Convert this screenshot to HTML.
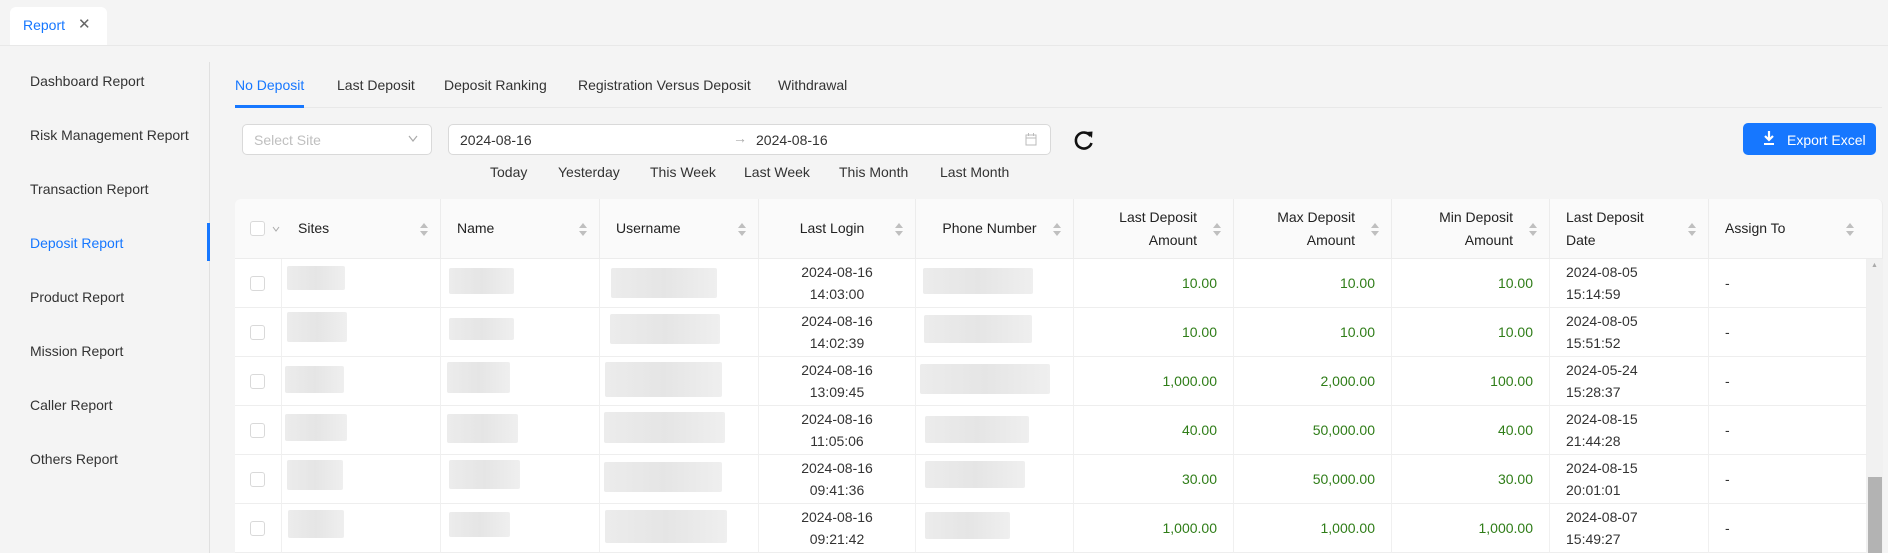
<!DOCTYPE html>
<html><head><meta charset="utf-8"><style>
*{box-sizing:border-box;margin:0;padding:0}
body{width:1888px;height:553px;overflow:hidden;background:#f4f4f4;font-family:"Liberation Sans",sans-serif;font-size:14px;color:#333;position:relative}
.a{position:absolute;white-space:nowrap}
.side{left:30px;font-size:14px;color:#333}
.tab{top:77px;font-size:14px}
.q{top:164px;font-size:14px;color:#333}
.th{position:absolute;top:199px;height:60px;background:#fafafa;border-right:1px solid #ececec;border-bottom:1px solid #ececec;color:#222;display:flex;align-items:center;padding:0 34px 0 16px;line-height:23px}
.sort{position:absolute;right:12px;top:24px;width:8px;height:13px}
.cell{position:absolute;height:49px;border-right:1px solid #f0f0f0;border-bottom:1px solid #eee;background:#fff;display:flex;align-items:center;line-height:22px}
.g{color:#2f7d18;justify-content:flex-end;padding-right:16px}
.blur{position:absolute;background:linear-gradient(90deg,#ececec,#e5e5e5 50%,#efefef);border-radius:2px}
.cb{position:absolute;width:15px;height:15px;border:1px solid #d9d9d9;border-radius:3px;background:#fff}
</style></head><body>
<div class="a" style="left:10px;top:7px;width:97px;height:38px;background:#fff;border-radius:6px 6px 0 0"></div>
<div class="a" style="left:23px;top:17px;color:#1677ff;font-size:14px">Report</div>
<div class="a" style="left:78px;top:15px;color:#666;font-size:15px">✕</div>
<div class="a" style="left:0;top:45px;width:1888px;height:1px;background:#e8e8e8"></div>
<div class="a" style="left:209px;top:62px;width:1px;height:491px;background:#e0e0e0"></div>
<div class="a side" style="top:73px">Dashboard Report</div>
<div class="a side" style="top:127px">Risk Management Report</div>
<div class="a side" style="top:181px">Transaction Report</div>
<div class="a side" style="top:235px;color:#1677ff">Deposit Report</div>
<div class="a" style="left:207px;top:223px;width:3px;height:38px;background:#1677ff"></div>
<div class="a side" style="top:289px">Product Report</div>
<div class="a side" style="top:343px">Mission Report</div>
<div class="a side" style="top:397px">Caller Report</div>
<div class="a side" style="top:451px">Others Report</div>
<div class="a tab" style="left:235px;color:#1677ff">No Deposit</div>
<div class="a tab" style="left:337px">Last Deposit</div>
<div class="a tab" style="left:444px">Deposit Ranking</div>
<div class="a tab" style="left:578px">Registration Versus Deposit</div>
<div class="a tab" style="left:778px">Withdrawal</div>
<div class="a" style="left:235px;top:107px;width:1647px;height:1px;background:#e8e8e8"></div>
<div class="a" style="left:235px;top:105px;width:69px;height:3px;background:#1677ff"></div>
<div class="a" style="left:242px;top:124px;width:190px;height:31px;background:#fff;border:1px solid #d9d9d9;border-radius:5px"></div>
<div class="a" style="left:254px;top:132px;color:#bfbfbf">Select Site</div>
<svg class="a" style="left:408px;top:135px" width="10" height="8" viewBox="0 0 10 8"><path d="M1 1L5 6L9 1" fill="none" stroke="#aaa" stroke-width="1.2"/></svg>
<div class="a" style="left:448px;top:124px;width:603px;height:31px;background:#fff;border:1px solid #d9d9d9;border-radius:5px"></div>
<div class="a" style="left:460px;top:132px">2024-08-16</div>
<div class="a" style="left:733px;top:130px;color:#aaa">→</div>
<div class="a" style="left:756px;top:132px">2024-08-16</div>
<svg class="a" style="left:1025px;top:133px" width="12" height="13" viewBox="0 0 12 13"><rect x="1" y="2" width="10" height="10" fill="none" stroke="#bbb"/><line x1="1" y1="5" x2="11" y2="5" stroke="#bbb"/><line x1="3.5" y1="0" x2="3.5" y2="3" stroke="#bbb"/><line x1="8.5" y1="0" x2="8.5" y2="3" stroke="#bbb"/></svg>
<svg class="a" style="left:1073px;top:129px" width="22" height="22" viewBox="0 0 22 22"><path d="M17.5 7A8 8 0 1 0 18.5 14" fill="none" stroke="#111" stroke-width="2.6"/><path d="M13 3L19.5 2.5L19 9Z" fill="#111"/></svg>
<div class="a" style="left:1743px;top:123px;width:133px;height:32px;background:#1677ff;border-radius:5px"></div>
<svg class="a" style="left:1763px;top:131px" width="12" height="14" viewBox="0 0 12 14"><path d="M6 0V8M2 5L6 9L10 5" stroke="#fff" stroke-width="2.2" fill="none"/><rect x="1" y="12" width="10" height="2" fill="#fff"/></svg>
<div class="a" style="left:1787px;top:132px;color:#fff">Export Excel</div>
<div class="a q" style="left:490px">Today</div>
<div class="a q" style="left:558px">Yesterday</div>
<div class="a q" style="left:650px">This Week</div>
<div class="a q" style="left:744px">Last Week</div>
<div class="a q" style="left:839px">This Month</div>
<div class="a q" style="left:940px">Last Month</div>
<div class="th" style="left:235px;width:47px;border-radius:6px 0 0 0"></div>
<div class="cb" style="left:250px;top:221px"></div>
<svg class="a" style="left:272px;top:226px" width="8" height="6" viewBox="0 0 8 6"><path d="M1 1L4 5L7 1" fill="none" stroke="#aaa"/></svg>
<div class="th" style="left:282px;width:159px">Sites<svg class="sort" viewBox="0 0 8 13"><path d="M4 0L8 5H0Z M4 13L8 8H0Z" fill="#bfbfbf"/></svg></div>
<div class="th" style="left:441px;width:159px">Name<svg class="sort" viewBox="0 0 8 13"><path d="M4 0L8 5H0Z M4 13L8 8H0Z" fill="#bfbfbf"/></svg></div>
<div class="th" style="left:600px;width:159px">Username<svg class="sort" viewBox="0 0 8 13"><path d="M4 0L8 5H0Z M4 13L8 8H0Z" fill="#bfbfbf"/></svg></div>
<div class="th" style="left:759px;width:157px;justify-content:center;padding:0 10px 0 0">Last Login<svg class="sort" viewBox="0 0 8 13"><path d="M4 0L8 5H0Z M4 13L8 8H0Z" fill="#bfbfbf"/></svg></div>
<div class="th" style="left:916px;width:158px;justify-content:center;padding:0 10px 0 0">Phone Number<svg class="sort" viewBox="0 0 8 13"><path d="M4 0L8 5H0Z M4 13L8 8H0Z" fill="#bfbfbf"/></svg></div>
<div class="th" style="left:1074px;width:160px;justify-content:flex-end;text-align:right;padding-right:36px">Last Deposit<br>Amount<svg class="sort" viewBox="0 0 8 13"><path d="M4 0L8 5H0Z M4 13L8 8H0Z" fill="#bfbfbf"/></svg></div>
<div class="th" style="left:1234px;width:158px;justify-content:flex-end;text-align:right;padding-right:36px">Max Deposit<br>Amount<svg class="sort" viewBox="0 0 8 13"><path d="M4 0L8 5H0Z M4 13L8 8H0Z" fill="#bfbfbf"/></svg></div>
<div class="th" style="left:1392px;width:158px;justify-content:flex-end;text-align:right;padding-right:36px">Min Deposit<br>Amount<svg class="sort" viewBox="0 0 8 13"><path d="M4 0L8 5H0Z M4 13L8 8H0Z" fill="#bfbfbf"/></svg></div>
<div class="th" style="left:1550px;width:159px">Last Deposit<br>Date<svg class="sort" viewBox="0 0 8 13"><path d="M4 0L8 5H0Z M4 13L8 8H0Z" fill="#bfbfbf"/></svg></div>
<div class="th" style="left:1709px;width:174px;border-radius:0 6px 0 0">Assign To<svg class="sort" style="right:28px" viewBox="0 0 8 13"><path d="M4 0L8 5H0Z M4 13L8 8H0Z" fill="#bfbfbf"/></svg></div>
<div id="rows"></div>
<div class="a" style="left:1867px;top:259px;width:16px;height:294px;background:#f1f1f1"></div>
<div class="a" style="left:1868px;top:477px;width:14px;height:76px;background:#b3b3b3"></div>
<div class="a" style="left:1871px;top:262px;color:#aaa;font-size:7px">▲</div>
<script>
var data=[["14:03:00","2024-08-16","10.00","10.00","10.00","2024-08-05","15:14:59"],
["14:02:39","2024-08-16","10.00","10.00","10.00","2024-08-05","15:51:52"],
["13:09:45","2024-08-16","1,000.00","2,000.00","100.00","2024-05-24","15:28:37"],
["11:05:06","2024-08-16","40.00","50,000.00","40.00","2024-08-15","21:44:28"],
["09:41:36","2024-08-16","30.00","50,000.00","30.00","2024-08-15","20:01:01"],
["09:21:42","2024-08-16","1,000.00","1,000.00","1,000.00","2024-08-07","15:49:27"]];
var cols=[235,282,441,600,759,916,1074,1234,1392,1550,1709,1867];
var bl=[[[287,266,58,24],[449,268,65,26],[611,268,106,30],[923,268,110,26]],
[[287,312,60,30],[449,318,65,22],[610,314,110,30],[924,315,108,28]],
[[285,366,59,27],[447,362,63,31],[605,362,117,35],[920,364,130,30]],
[[285,414,62,27],[447,414,71,29],[604,412,121,31],[925,416,104,27]],
[[287,460,56,30],[449,460,71,29],[604,462,118,30],[925,461,100,27]],
[[288,510,56,28],[449,512,61,25],[605,510,122,33],[925,512,85,27]]];
var h="";
data.forEach(function(r,i){var t=259+i*49;
for(var c=0;c<11;c++){var w=cols[c+1]-cols[c];var cls="cell",st="",tx="";
if(c==4){st="justify-content:center;text-align:center;";tx=r[1]+"<br>"+r[0];}
if(c>=6&&c<=8){cls+=" g";tx=r[c-4];}
if(c==9){st="padding-left:16px;";tx=r[5]+"<br>"+r[6];}
if(c==10){st="padding-left:16px;";tx="-";}
h+='<div class="'+cls+'" style="left:'+cols[c]+'px;top:'+t+'px;width:'+w+'px;'+st+'">'+tx+'</div>';}
h+='<div class="cb" style="left:250px;top:'+(t+17)+'px"></div>';
bl[i].forEach(function(b){h+='<div class="blur" style="left:'+b[0]+'px;top:'+b[1]+'px;width:'+b[2]+'px;height:'+b[3]+'px"></div>';});
});
document.getElementById("rows").innerHTML=h;
</script>
</body></html>
